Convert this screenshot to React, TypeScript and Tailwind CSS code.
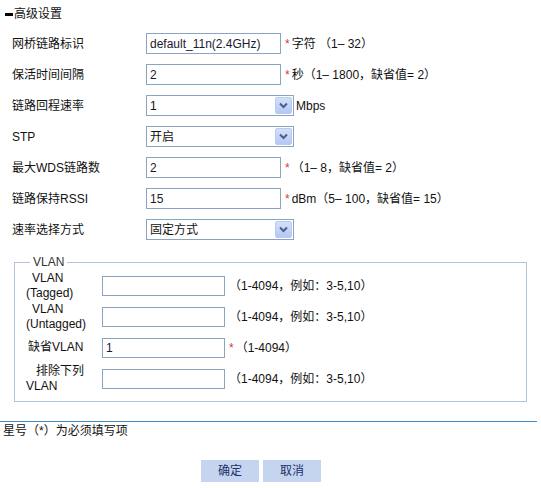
import React from 'react';

const FONT = "font-['Liberation_Sans','Noto_Sans_CJK_SC',sans-serif]";

const Star = () => <span className="text-[#d23c3c] mr-[2px]">*</span>;

const Arrow = () => (
  <span className="absolute right-[1px] top-[1px] w-[17px] h-[17px] bg-gradient-to-b from-[#d3e0fb] to-[#b4c8f4] border border-[#b9ccef] rounded-[2px] flex items-center justify-center">
    <svg width="9" height="7" viewBox="0 0 9 7">
      <path d="M1 1.5 L4.5 5 L8 1.5" stroke="#4b5f8a" strokeWidth="2" fill="none" />
    </svg>
  </span>
);

const TextBox = ({ value, w = 'w-[135px]', h = 'h-[21px]' }: { value: string; w?: string; h?: string }) => (
  <div className={`${w} ${h} border border-[#8aa4c2] bg-white px-[3px] flex items-center text-[#1a1a2e] shrink-0`}>
    {value}
  </div>
);

const Select = ({ value }: { value: string }) => (
  <div className="relative w-[148px] h-[21px] border border-[#8aa4c2] bg-white px-[3px] flex items-center shrink-0">
    {value}
    <Arrow />
  </div>
);

const Row = ({ label, children }: { label: string; children: React.ReactNode }) => (
  <div className="flex items-center h-[31px]">
    <div className="w-[146px] pl-[12px] shrink-0">{label}</div>
    {children}
  </div>
);

const VRow = ({ label, children }: { label: React.ReactNode; children: React.ReactNode }) => (
  <div className="flex items-center h-[31px]">
    <div className="w-[87px] pl-[11px] shrink-0 leading-[15px]">{label}</div>
    {children}
  </div>
);

const Hint = ({ children }: { children: React.ReactNode }) => (
  <span className="ml-[4px] whitespace-nowrap">{children}</span>
);

const App: React.FC = () => {
  return (
    <div className={`w-[541px] h-[488px] bg-white text-[12px] text-[#111] ${FONT} overflow-hidden`}>
      {/* 标题 */}
      <div className="h-[28px] flex items-center pl-[5px]">
        <span className="inline-block w-[8px] h-[3px] bg-black mr-[1px]" />
        <span>高级设置</span>
      </div>

      <Row label="网桥链路标识">
        <TextBox value="default_11n(2.4GHz)" />
        <Hint><Star />字符 （1– 32）</Hint>
      </Row>
      <Row label="保活时间间隔">
        <TextBox value="2" />
        <Hint><Star />秒（1– 1800，缺省值= 2）</Hint>
      </Row>
      <Row label="链路回程速率">
        <Select value="1" />
        <span className="ml-[2px]">Mbps</span>
      </Row>
      <Row label="STP">
        <Select value="开启" />
      </Row>
      <Row label="最大WDS链路数">
        <TextBox value="2" />
        <Hint><Star />（1– 8，缺省值= 2）</Hint>
      </Row>
      <Row label="链路保持RSSI">
        <TextBox value="15" />
        <Hint><Star />dBm（5– 100，缺省值= 15）</Hint>
      </Row>
      <Row label="速率选择方式">
        <Select value="固定方式" />
      </Row>

      <fieldset className="mt-[10px] ml-[14px] w-[513px] border border-[#b3c3d9] pb-[7px]">
        <legend className="ml-[15px] px-[3px] leading-[15px] text-[#333]">VLAN</legend>
        <VRow label={<><div className="pl-[6px]">VLAN</div><div>(Tagged)</div></>}>
          <TextBox value="" w="w-[123px]" h="h-[20px]" />
          <Hint>（1-4094，例如：3-5,10）</Hint>
        </VRow>
        <VRow label={<><div className="pl-[6px]">VLAN</div><div>(Untagged)</div></>}>
          <TextBox value="" w="w-[123px]" h="h-[20px]" />
          <Hint>（1-4094，例如：3-5,10）</Hint>
        </VRow>
        <VRow label={<div className="pl-[2px]">缺省VLAN</div>}>
          <TextBox value="1" w="w-[123px]" h="h-[20px]" />
          <Hint><Star />（1-4094）</Hint>
        </VRow>
        <VRow label={<><div className="pl-[10px]">排除下列</div><div>VLAN</div></>}>
          <TextBox value="" w="w-[123px]" h="h-[20px]" />
          <Hint>（1-4094，例如：3-5,10）</Hint>
        </VRow>
      </fieldset>

      <div className="mt-[19px] w-[537px] h-[1px] bg-[#3f8fcb]" />
      <div className="pl-[3px] mt-[2px] leading-[15px]">星号（*）为必须填写项</div>

      <div className="mt-[21px] flex gap-[4px] pl-[201px]">
        <button className="w-[58px] h-[22px] bg-[#c5d5ef] text-[#1c2f6b]">确定</button>
        <button className="w-[58px] h-[22px] bg-[#c5d5ef] text-[#1c2f6b]">取消</button>
      </div>
    </div>
  );
};

export default App;
